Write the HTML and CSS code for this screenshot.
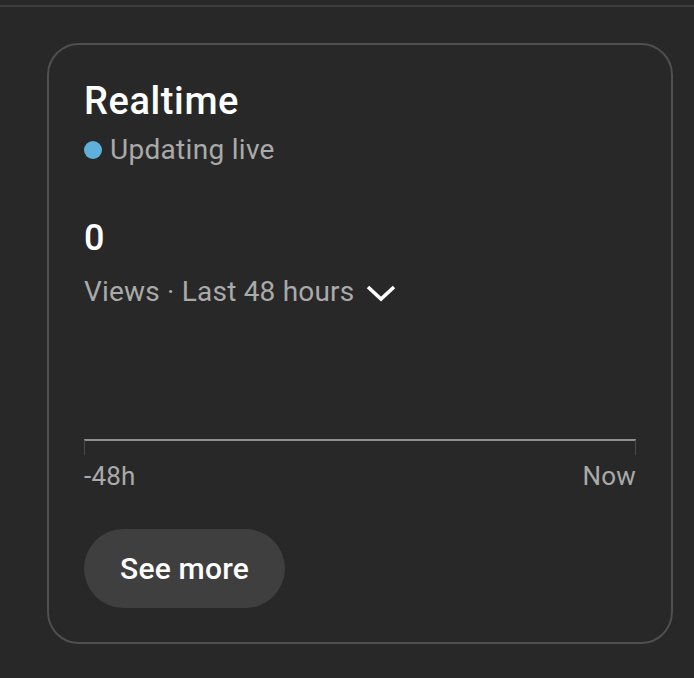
FILE: index.html
```html
<!DOCTYPE html>
<html>
<head>
<meta charset="utf-8">
<link rel="stylesheet" href="styles.css">
</head>
<body>
<div class="topline"></div>
<div class="card">
  <div class="title">Realtime</div>
  <div class="live"><span class="dot"></span><span>Updating live</span></div>
  <div class="count">0</div>
  <div class="metric"><span>Views · Last 48 hours</span>
    <svg class="chev" width="32" height="18" viewBox="0 0 32 18"><polyline points="3,3 16,15 29,3" fill="none" stroke="#ffffff" stroke-width="3.6"/></svg>
  </div>
  <div class="chart"><div class="axis"></div></div>
  <div class="labels"><span>-48h</span><span>Now</span></div>
  <button class="more">See more</button>
</div>
</body>
</html>
```
FILE: styles.css
```css
html, body {
  margin: 0;
  padding: 0;
  background: #282828;
  font-family: Roboto, "Liberation Sans", sans-serif;
}
.topline {
  margin-top: 5px;
  height: 2px;
  background: #3d3d3d;
}
.card {
  margin: 36px 21px 0 47px;
  height: 601px;
  box-sizing: border-box;
  border: 2px solid #4f4f4f;
  border-radius: 32px;
  padding: 33px 35px 0 35px;
  display: flex;
  flex-direction: column;
  align-items: flex-start;
}
.title {
  font-size: 38px;
  line-height: 46px;
  font-weight: 500;
  letter-spacing: 0.6px;
  color: #ffffff;
}
.live {
  margin-top: 8px;
  display: flex;
  align-items: center;
  gap: 8px;
  font-size: 28px;
  line-height: 36px;
  letter-spacing: 0.3px;
  color: #aaaaaa;
}
.dot {
  width: 18px;
  height: 18px;
  border-radius: 50%;
  background: #5fb1db;
}
.count {
  margin-top: 48px;
  font-size: 36px;
  line-height: 44px;
  font-weight: 500;
  color: #ffffff;
}
.metric {
  margin-top: 14px;
  display: flex;
  align-items: center;
  gap: 11px;
  font-size: 28px;
  line-height: 36px;
  letter-spacing: 0.2px;
  color: #aaaaaa;
}
.chev {
  display: block;
  margin-top: 2px;
}
.chart {
  align-self: stretch;
  margin-top: 129px;
}
.axis {
  height: 14px;
  border-top: 2px solid #909090;
  border-left: 1px solid #4a4a4a;
  border-right: 1px solid #4a4a4a;
}
.labels {
  align-self: stretch;
  display: flex;
  justify-content: space-between;
  margin-top: 5px;
  font-size: 26px;
  line-height: 32px;
  letter-spacing: 0.2px;
  color: #aaaaaa;
}
.more {
  margin-top: 37px;
  width: 201px;
  height: 79px;
  border: none;
  border-radius: 40px;
  background: #3f3f3f;
  color: #ffffff;
  font-family: Roboto, "Liberation Sans", sans-serif;
  font-size: 30px;
  font-weight: 500;
  letter-spacing: 0.2px;
  padding: 0;
}
```
